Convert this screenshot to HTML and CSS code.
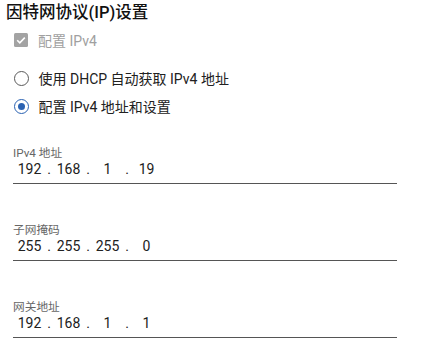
FILE: index.html
```html
<!DOCTYPE html>
<html lang="zh-CN">
<head>
    <meta charset="UTF-8">
    <title>因特网协议(IP)设置</title>
    <link rel="stylesheet" href="styles.css">
</head>
<body>
    <div class="panel">
        <h1 class="title">因特网协议(IP)设置</h1>

        <label class="option check-row disabled">
            <svg class="checkbox" width="14" height="14" viewBox="0 0 14 14">
                <rect width="14" height="14" rx="1.5" fill="#a3a3a3"/>
                <polyline points="3.2,7.2 5.8,9.8 10.8,4.6" fill="none" stroke="#fff" stroke-width="1.6"/>
            </svg>
            <span>配置 IPv4</span>
        </label>

        <div class="options">
            <label class="option">
                <span class="radio"></span>
                <span>使用 DHCP 自动获取 IPv4 地址</span>
            </label>
            <label class="option">
                <span class="radio checked"></span>
                <span>配置 IPv4 地址和设置</span>
            </label>
        </div>

        <div class="field">
            <div class="field-label">IPv4 地址</div>
            <div class="ip">
                <span class="seg">192</span><span class="dot">.</span>
                <span class="seg">168</span><span class="dot">.</span>
                <span class="seg">1</span><span class="dot">.</span>
                <span class="seg">19</span>
            </div>
        </div>

        <div class="field">
            <div class="field-label">子网掩码</div>
            <div class="ip">
                <span class="seg">255</span><span class="dot">.</span>
                <span class="seg">255</span><span class="dot">.</span>
                <span class="seg">255</span><span class="dot">.</span>
                <span class="seg">0</span>
            </div>
        </div>

        <div class="field">
            <div class="field-label">网关地址</div>
            <div class="ip">
                <span class="seg">192</span><span class="dot">.</span>
                <span class="seg">168</span><span class="dot">.</span>
                <span class="seg">1</span><span class="dot">.</span>
                <span class="seg">1</span>
            </div>
        </div>
    </div>
</body>
</html>
```

FILE: styles.css
```css
body {
    margin: 0;
    background: #fff;
    font-family: Roboto, "Noto Sans CJK SC", sans-serif;
    color: #212121;
}

.panel {
    width: 422px;
    padding-top: 3px;
}

.title {
    margin: 0;
    padding-left: 6px;
    font-size: 16.5px;
    font-weight: 500;
    line-height: 20px;
    color: #111;
}

.option {
    display: flex;
    align-items: center;
    gap: 10px;
    height: 28px;
    padding-left: 14px;
    font-size: 14px;
}

.check-row {
    margin-top: 3px;
}

.disabled {
    color: #a0a0a0;
}

.checkbox {
    flex: none;
}

.options {
    margin-top: 10px;
}

.radio {
    flex: none;
    box-sizing: border-box;
    width: 15px;
    height: 15px;
    margin-left: -0.5px;
    border: 1.5px solid #5a5a5a;
    border-radius: 50%;
    display: flex;
    align-items: center;
    justify-content: center;
}

.radio.checked {
    border-color: #2a62b2;
}

.radio.checked::after {
    content: "";
    width: 7px;
    height: 7px;
    border-radius: 50%;
    background: #2a62b2;
}

.field {
    margin: 26px 25px 0 13px;
    border-bottom: 1px solid #555;
    padding-bottom: 5px;
}

.field + .field {
    margin-top: 39px;
}

.field-label {
    font-size: 11.7px;
    line-height: 14px;
    color: #666;
}

.ip {
    display: flex;
    padding-left: 1.5px;
    font-size: 14px;
    line-height: 18px;
}

.seg {
    width: 30px;
    text-align: center;
}

.dot {
    width: 9px;
    text-align: center;
}
```
